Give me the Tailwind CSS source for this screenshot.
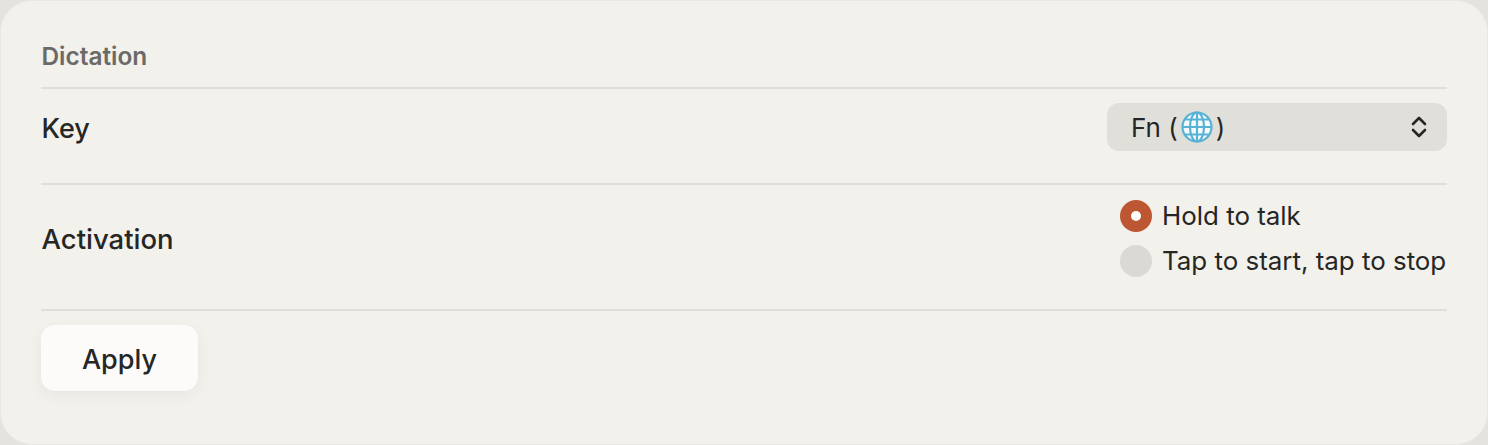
<!DOCTYPE html>
<html lang="en">
<head>
  <meta charset="UTF-8">
  <title>Dictation</title>
  <script src="https://cdn.jsdelivr.net/npm/@tailwindcss/browser@4"></script>
</head>
<body class="bg-[#e4e3de] h-[445px] overflow-hidden font-['Inter','Noto_Sans',sans-serif] text-[#262625]">
  <div class="h-[445px] bg-[#f2f1ec] rounded-[32px] border border-[#e9e8e3] pl-[40px] pr-[40px] pt-[42px]">
    <!-- header -->
    <div class="h-[46px] border-b-2 border-[#dfded9] pl-[0.5px] text-[24.4px] leading-[26px] font-semibold text-[#6b6a67]">Dictation</div>

    <!-- key -->
    <div class="h-[96px] border-b-2 border-[#dfded9] flex justify-between items-center pt-[14px] pb-[32px]">
      <span class="text-[27px] font-medium pt-[4px] pl-[0.5px]">Key</span>
      <div class="w-[340px] h-[48px] bg-[#e0dfd9] rounded-[12px] flex items-center justify-between pl-[24px] pr-[20px]">
        <span class="text-[26px] flex items-center">Fn (
          <svg class="mx-[3px]" width="32" height="32" viewBox="0 0 32 32" fill="#f7fafb" stroke="#58b2d6" stroke-width="2.2">
            <circle cx="16" cy="16" r="14.5"/>
            <ellipse cx="16" cy="16" rx="7" ry="14.5"/>
            <path d="M16 1.5v29M1.5 16h29M4 8.5h24M4 23.5h24" fill="none"/>
          </svg>
          )</span>
        <svg width="16" height="22" viewBox="0 0 16 22" fill="none" stroke="#262625" stroke-width="2.6" stroke-linecap="round" stroke-linejoin="round">
          <path d="M2 8l6-6 6 6M2 14l6 6 6-6"/>
        </svg>
      </div>
    </div>

    <!-- activation -->
    <div class="h-[126px] border-b-2 border-[#dfded9] flex justify-between items-center pt-[15px] pb-[32px]">
      <span class="text-[27.5px] font-medium pt-[3px] pl-[0.5px]">Activation</span>
      <div class="w-[327px] flex flex-col gap-[13px]">
        <div class="flex items-center gap-[10px] h-[32px]">
          <span class="shrink-0 w-[32px] h-[32px] rounded-full bg-[#bd5733] flex items-center justify-center"><span class="w-[10px] h-[10px] rounded-full bg-white"></span></span>
          <span class="text-[25.9px]">Hold to talk</span>
        </div>
        <div class="flex items-center gap-[10px] h-[32px]">
          <span class="shrink-0 w-[32px] h-[32px] rounded-full bg-[#dad9d4]"></span>
          <span class="text-[25.9px] whitespace-nowrap">Tap to start, tap to stop</span>
        </div>
      </div>
    </div>

    <!-- apply -->
    <button class="mt-[14px] w-[157px] h-[66px] pt-[4px] bg-[#fcfbf9] rounded-[14px] text-[27px] font-medium shadow-[0_4px_16px_rgba(0,0,0,0.05)]">Apply</button>
  </div>
</body>
</html>
